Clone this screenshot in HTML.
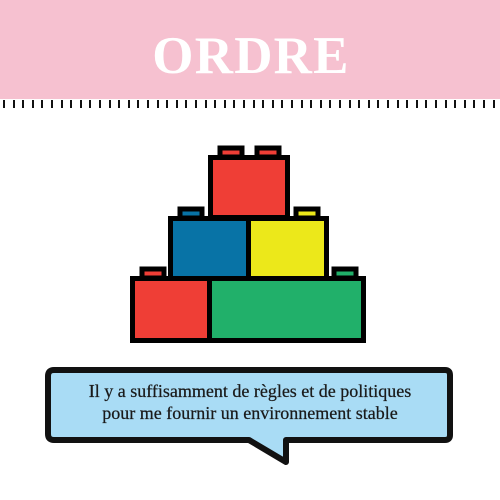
<!DOCTYPE html>
<html><head><meta charset="utf-8"><style>
html,body{margin:0;padding:0;background:#fff;}
svg{display:block}
</style></head><body>
<svg width="500" height="500" viewBox="0 0 500 500" xmlns="http://www.w3.org/2000/svg">
<rect x="0" y="0" width="500" height="99" fill="#f6c1d0"/>
<text x="251" y="73" text-anchor="middle" font-family="Liberation Serif, serif" font-weight="bold" font-size="53" letter-spacing="1.2" fill="#fff">ORDRE</text>
<g stroke="#000" stroke-width="5" stroke-linejoin="miter">
<rect x="220" y="148" width="22" height="9" fill="#ef3e36"/>
<rect x="257" y="148" width="22" height="9" fill="#ef3e36"/>
<rect x="180" y="209" width="22" height="9" fill="#0873a6"/>
<rect x="296" y="209" width="22" height="9" fill="#ece81a"/>
<rect x="142" y="269" width="22" height="9" fill="#ef3e36"/>
<rect x="334" y="269" width="22" height="9" fill="#21b06a"/>
<rect x="210.5" y="157.5" width="77" height="60" fill="#ef3e36"/>
<rect x="170.5" y="218.5" width="78" height="60" fill="#0873a6"/>
<rect x="248.5" y="218.5" width="78" height="60" fill="#ece81a"/>
<rect x="132.5" y="278.5" width="77" height="62" fill="#ef3e36"/>
<rect x="209.5" y="278.5" width="154" height="62" fill="#21b06a"/>
</g>
<path d="M54,370 H445 Q450,370 450,375 V435 Q450,440 445,440 H286 V462 L249,440 H54 Q48,440 48,434 V376 Q48,370 54,370 Z" fill="#a9dcf5" stroke="#111" stroke-width="6" stroke-linejoin="round"/>
<text x="250" y="397" text-anchor="middle" font-family="Liberation Serif, serif" font-size="18" fill="#1a1a1a" stroke="#1a1a1a" stroke-width="0.25">Il y a suffisamment de règles et de politiques</text>
<text x="250" y="419" text-anchor="middle" font-family="Liberation Serif, serif" font-size="18" fill="#1a1a1a" stroke="#1a1a1a" stroke-width="0.25">pour me fournir un environnement stable</text>
<g fill="#111">
<rect x="3" y="100" width="2" height="8"/><rect x="13" y="100" width="2" height="8"/><rect x="22" y="100" width="2" height="8"/><rect x="32" y="100" width="2" height="8"/><rect x="41" y="100" width="2" height="8"/><rect x="51" y="100" width="2" height="8"/><rect x="61" y="100" width="2" height="8"/><rect x="70" y="100" width="2" height="8"/><rect x="80" y="100" width="2" height="8"/><rect x="89" y="100" width="2" height="8"/><rect x="99" y="100" width="2" height="8"/><rect x="109" y="100" width="2" height="8"/><rect x="118" y="100" width="2" height="8"/><rect x="128" y="100" width="2" height="8"/><rect x="137" y="100" width="2" height="8"/><rect x="147" y="100" width="2" height="8"/><rect x="157" y="100" width="2" height="8"/><rect x="166" y="100" width="2" height="8"/><rect x="176" y="100" width="2" height="8"/><rect x="185" y="100" width="2" height="8"/><rect x="195" y="100" width="2" height="8"/><rect x="205" y="100" width="2" height="8"/><rect x="214" y="100" width="2" height="8"/><rect x="224" y="100" width="2" height="8"/><rect x="233" y="100" width="2" height="8"/><rect x="243" y="100" width="2" height="8"/><rect x="253" y="100" width="2" height="8"/><rect x="262" y="100" width="2" height="8"/><rect x="272" y="100" width="2" height="8"/><rect x="281" y="100" width="2" height="8"/><rect x="291" y="100" width="2" height="8"/><rect x="301" y="100" width="2" height="8"/><rect x="310" y="100" width="2" height="8"/><rect x="320" y="100" width="2" height="8"/><rect x="329" y="100" width="2" height="8"/><rect x="339" y="100" width="2" height="8"/><rect x="349" y="100" width="2" height="8"/><rect x="358" y="100" width="2" height="8"/><rect x="368" y="100" width="2" height="8"/><rect x="377" y="100" width="2" height="8"/><rect x="387" y="100" width="2" height="8"/><rect x="397" y="100" width="2" height="8"/><rect x="406" y="100" width="2" height="8"/><rect x="416" y="100" width="2" height="8"/><rect x="425" y="100" width="2" height="8"/><rect x="435" y="100" width="2" height="8"/><rect x="445" y="100" width="2" height="8"/><rect x="454" y="100" width="2" height="8"/><rect x="464" y="100" width="2" height="8"/><rect x="473" y="100" width="2" height="8"/><rect x="483" y="100" width="2" height="8"/><rect x="493" y="100" width="2" height="8"/>
</g>
</svg>
</body></html>
